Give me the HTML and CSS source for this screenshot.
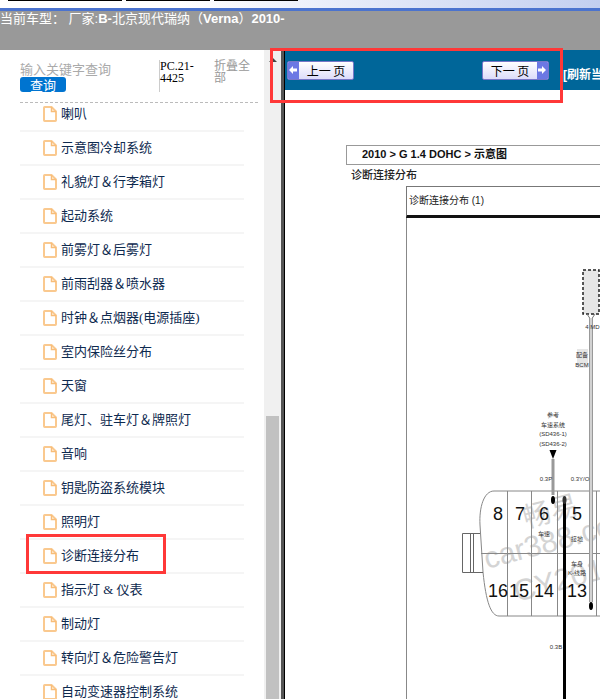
FILE: index.html
```html
<!DOCTYPE html>
<html lang="zh-CN">
<head>
<meta charset="utf-8">
<title>诊断连接分布</title>
<link rel="stylesheet" href="styles.css">
</head>
<body>
<svg class="defs" aria-hidden="true">
  <symbol id="file" viewBox="0 0 14 16">
    <path d="M1.7 1H8.5L13 5.5V14.3Q13 15 12.3 15H1.7Q1 15 1 14.3V1.7Q1 1 1.7 1Z" fill="#fff" stroke="#fac98f" stroke-width="2"/>
    <path d="M8.5 1V5.5H13" fill="none" stroke="#f8bd78" stroke-width="1.5"/>
  </symbol>
</svg>
<div class="strip"><span class="tab wide"></span><span class="tab"></span><span class="tab"></span></div>
<header class="model">当前车型： 厂家:<b>B-</b>北京现代瑞纳（<b>Verna</b>）<b>2010-</b></header>
<div class="frames">
  <aside class="sidebar">
    <div class="panel">
      <form class="search">
        <div class="query">
          <input class="keyword" type="text" placeholder="输入关键字查询" aria-label="输入关键字查询">
          <button class="submit" type="button">查询</button>
        </div>
        <div class="code">PC.21-4425</div>
        <a class="fold" href="#">折叠全部</a>
      </form>
      <ul class="tree">
        <li><svg><use href="#file"/></svg><a href="#">喇叭</a></li>
        <li><svg><use href="#file"/></svg><a href="#">示意图冷却系统</a></li>
        <li><svg><use href="#file"/></svg><a href="#">礼貌灯＆行李箱灯</a></li>
        <li><svg><use href="#file"/></svg><a href="#">起动系统</a></li>
        <li><svg><use href="#file"/></svg><a href="#">前雾灯＆后雾灯</a></li>
        <li><svg><use href="#file"/></svg><a href="#">前雨刮器＆喷水器</a></li>
        <li><svg><use href="#file"/></svg><a href="#">时钟＆点烟器(电源插座)</a></li>
        <li><svg><use href="#file"/></svg><a href="#">室内保险丝分布</a></li>
        <li><svg><use href="#file"/></svg><a href="#">天窗</a></li>
        <li><svg><use href="#file"/></svg><a href="#">尾灯、驻车灯＆牌照灯</a></li>
        <li><svg><use href="#file"/></svg><a href="#">音响</a></li>
        <li><svg><use href="#file"/></svg><a href="#">钥匙防盗系统模块</a></li>
        <li><svg><use href="#file"/></svg><a href="#">照明灯</a></li>
        <li class="marked"><svg><use href="#file"/></svg><a href="#">诊断连接分布</a></li>
        <li><svg><use href="#file"/></svg><a href="#">指示灯 &amp; 仪表</a></li>
        <li><svg><use href="#file"/></svg><a href="#">制动灯</a></li>
        <li><svg><use href="#file"/></svg><a href="#">转向灯＆危险警告灯</a></li>
        <li><svg><use href="#file"/></svg><a href="#">自动变速器控制系统</a></li>
      </ul>
    </div>
    <div class="scrollbar"><span class="arrow"></span><span class="thumb"></span></div>
  </aside>
  <main class="content">
    <nav class="toolbar">
      <button class="page" type="button"><span class="cap"><svg viewBox="0 0 10 10"><path d="M1 5L5 1V3.5H9V6.5H5V9Z" fill="#fff"/></svg></span><span class="label">上一 页</span></button>
      <button class="page next" type="button"><span class="label">下一 页</span><span class="cap"><svg viewBox="0 0 10 10"><path d="M9 5L5 1V3.5H1V6.5H5V9Z" fill="#fff"/></svg></span></button>
      <a class="refresh" href="#">[刷新当前页]</a>
      <span class="outline"></span>
    </nav>
    <article class="doc">
      <div class="crumbs">2010 &gt; G 1.4 DOHC &gt; 示意图</div>
      <h1>诊断连接分布</h1>
      <div class="sheet"><h2>诊断连接分布 (1)</h2></div>
      <svg class="diagram" viewBox="285 218 315 481">
        <g class="mark">
          <text class="mark-cjk" transform="translate(526 528) rotate(-15)">畅易</text>
          <text transform="translate(487 569) rotate(-15)">car388.com</text>
          <text transform="translate(517 602) rotate(-15)">CY2019</text>
        </g>
        <path d="M406.500 218V699" stroke="#888"/>
        <rect x="583" y="270" width="16" height="44" fill="#e6e6e6" stroke="#222" stroke-width="1.500" stroke-dasharray="3 2"/>
        <path d="M587 314L591 320L595 314" fill="none" stroke="#777"/>
        <g fill="none" stroke="#888">
          <path d="M600 491H494C484 491 479 507 480 525L483 572C486 602 491 616 499 616H600"/>
          <path d="M481 553.500H600M507.500 491V616M531.500 491V616M557.500 491V616M596.500 491V616"/>
          <path d="M480 533.500H462.500V572.500H483M470.500 533.500V572.500M473.500 533.500V572.500" stroke="#666"/>
        </g>
        <path d="M591 318V602" stroke="#999" stroke-width="4"/>
        <path d="M591 318V602" stroke="#d2d2d2" stroke-width="2"/>
        <path d="M553 459V495" stroke="#999" stroke-width="3"/>
        <path d="M549.500 450H556.500L553 459Z"/>
        <path d="M564.500 500V699" stroke="#000" stroke-width="3"/>
        <ellipse cx="553" cy="500" rx="2" ry="4"/>
        <ellipse cx="564.500" cy="500" rx="2" ry="4" fill="#333"/>
        <ellipse cx="591" cy="606" rx="2" ry="4"/>
        <rect x="577" y="349" width="11" height="19" fill="#e6e6e6"/>
        <g class="pins">
          <text x="498" y="520">8</text><text x="520" y="520">7</text><text x="544" y="520">6</text><text x="577" y="520">5</text>
          <text x="498" y="597">16</text><text x="519" y="597">15</text><text x="544" y="597">14</text><text x="577" y="597">13</text>
        </g>
        <g class="notes">
          <text x="553" y="417">参考</text><text x="553" y="427">车速系统</text>
          <text x="553" y="436">(SD436-1)</text><text x="553" y="446">(SD436-2)</text>
          <text x="546" y="481">0.3P</text><text x="580" y="481">0.3Y/O</text><text x="556" y="649">0.3B</text>
          <text x="587" y="329">4</text><text x="595" y="329">MD</text>
          <text x="582" y="357">配备</text><text x="582" y="367">BCM</text>
          <text x="544" y="536">车速</text><text x="577" y="541">接地</text>
          <text x="577" y="566">车身</text><text x="577" y="575">K-线路</text>
        </g>
      </svg>
    </article>
  </main>
</div>
</body>
</html>
```

FILE: styles.css
```css
*, *::after { box-sizing: border-box; }
body {
  margin: 0;
  height: 100vh;
  display: flex;
  flex-direction: column;
  overflow: hidden;
  background: #fff;
  font: 13px/16px "Liberation Serif", "Noto Sans CJK SC", serif;
}
a { color: inherit; text-decoration: none; }
button { padding: 0; border: 0; cursor: pointer; }
.defs { position: absolute; width: 0; height: 0; }

.strip {
  flex: none;
  height: 11px;
  display: flex;
  gap: 4px;
  padding-left: 8px;
  background: linear-gradient(90deg, #fff 30%, #c3cff0);
  border-bottom: 3px solid #4b73ce;
}
.tab { width: 84px; height: 1px; background: #000; }
.tab.wide { width: 114px; }
.model {
  flex: none;
  height: 39px;
  background: #999;
  color: #fff;
  font-family: "Liberation Sans", "Noto Sans CJK SC", sans-serif;
  white-space: pre;
}
.frames { flex: 1; min-height: 0; display: flex; }

.sidebar {
  flex: none;
  width: 285px;
  display: flex;
  border-right: 1px solid #000;
  box-shadow: inset -3px 0 #555;
}
.panel { flex: 1; overflow: hidden; padding-left: 20px; }
.search {
  height: 53px;
  display: flex;
  margin-right: 6px;
  padding-top: 10px;
  border-bottom: 1px dashed #bbb;
}
.query { width: 139px; display: flex; flex-direction: column; align-items: flex-start; }
.keyword {
  width: 130px;
  height: 17px;
  padding: 0;
  border: 0;
  outline: 0;
  font: 13px/17px "Noto Sans CJK SC", sans-serif;
}
.keyword::placeholder { color: #aaa; }
.submit {
  width: 46px;
  height: 15px;
  border-radius: 3px;
  background: #0074d0;
  color: #fff;
  font: 13px/14px "Noto Sans CJK SC", sans-serif;
}
.code { width: 55px; height: 32px; padding-right: 10px; border-left: 1px solid #ccc; font-size: 12px; line-height: 12px; }
.fold { width: 38px; color: #999; font-size: 12px; line-height: 12px; }
.tree { margin: -5px 20px 0 0; padding: 0; list-style: none; color: #0e2a4f; }
.tree li {
  position: relative;
  height: 34px;
  display: flex;
  align-items: center;
  gap: 4px;
  padding-left: 23px;
  border-bottom: 2px solid #f5f5f5;
  white-space: nowrap;
}
.tree svg { width: 14px; height: 16px; }
.marked::after {
  content: "";
  position: absolute;
  left: 6px;
  top: -6px;
  width: 140px;
  height: 40px;
  border: 3px solid #ff3838;
}
.scrollbar { width: 17px; margin-right: 3px; display: flex; flex-direction: column; align-items: center; background: #f0f0f0; }
.arrow { margin-top: 8px; border: 4px solid transparent; border-top: 0; border-bottom-color: #444; }
.thumb { flex: 1; width: 13px; margin-top: 354px; background: #c1c1c1; }

.content { flex: 1; min-width: 0; }
.toolbar {
  position: relative;
  height: 40px;
  display: flex;
  align-items: center;
  padding-left: 2px;
  background: #069;
}
.page {
  flex: none;
  width: 67px;
  height: 19px;
  display: flex;
  overflow: hidden;
  border: 1px solid #7777c8;
  border-radius: 2px;
  background: linear-gradient(#fff, #dcdcfa);
  font: 12px/17px "Noto Sans CJK SC", sans-serif;
  color: #000;
}
.page.next { margin-left: 128px; }
.cap { width: 11px; height: 17px; display: flex; align-items: center; background: #6c78e4; }
.cap svg { width: 10px; height: 10px; }
.label { flex: 1; }
.refresh {
  flex: 1;
  min-width: 0;
  overflow: hidden;
  margin: 10px 0 0 14px;
  color: #fff;
  font: bold 12px/20px "Liberation Sans", "Noto Sans CJK SC", sans-serif;
  white-space: nowrap;
}
.outline {
  position: absolute;
  left: -15px;
  top: -2px;
  width: 293px;
  height: 55px;
  border: 3px solid #ff3838;
}
.doc { padding-top: 55px; font-family: "Liberation Sans", "Noto Sans CJK SC", sans-serif; color: #222; }
.crumbs {
  height: 20px;
  margin-left: 61px;
  padding-left: 15px;
  border: 1px solid #999;
  border-right: 0;
  font-size: 11px;
  line-height: 17px;
  font-weight: bold;
  color: #111;
}
h1 { margin: 2px 0 3px 66px; font-size: 11px; line-height: 16px; font-weight: 500; }
.sheet { margin-left: 121px; border: 1px solid #777; border-right: 0; border-bottom: 3px solid #111; }
h2 { margin: 0; padding-left: 2px; font: 10px/28px "Liberation Sans", "Noto Sans CJK SC", sans-serif; }
.diagram { display: block; width: 315px; height: 481px; }
.diagram text { font-family: "Liberation Sans", "Noto Sans CJK SC", sans-serif; }
.diagram .mark text { font-size: 30px; fill: #d4d4d4; }
.diagram .mark .mark-cjk { font-size: 28px; }
.pins { font-size: 18px; text-anchor: middle; fill: #111; }
.notes { font-size: 6px; text-anchor: middle; fill: #333; }
```
